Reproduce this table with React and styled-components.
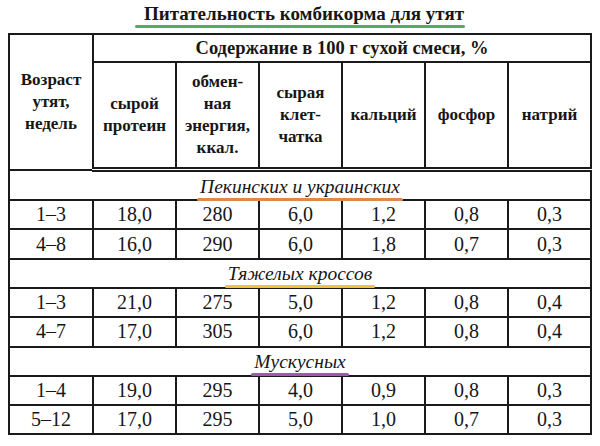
import styled, { createGlobalStyle } from 'styled-components';

const serif = `"Liberation Serif", "Tinos", "Times New Roman", serif`;

const GlobalStyle = createGlobalStyle`
  body {
    margin: 0;
    background: #ffffff;
    color: #161616;
  }
`;

const Page = styled.div`
  width: 600px;
  height: 446px;
  padding: 0 8px;
  box-sizing: border-box;
  font-family: ${serif};
`;

const TitleRow = styled.div`
  display: flex;
  justify-content: center;
  align-items: flex-start;
  height: 33px;
  padding-top: 3px;
  box-sizing: border-box;
`;

const Title = styled.h1`
  position: relative;
  margin: 0;
  font-family: ${serif};
  font-size: 19px;
  font-weight: bold;
  line-height: 22px;
  padding: 0 1px 0 9px;
  &::after {
    content: '';
    position: absolute;
    left: 0;
    right: 0;
    bottom: -3px;
    height: 3px;
    border-radius: 2px;
    background: ${(p) => p.$line};
  }
`;

const Table = styled.table`
  width: 583px;
  border-collapse: collapse;
  table-layout: fixed;
  border: 2px solid #1a1a1a;
  font-family: ${serif};
`;

const HeadCell = styled.th`
  border: 2px solid #1a1a1a;
  font-family: ${serif};
  font-size: ${(p) => p.$size || '17px'};
  font-weight: bold;
  line-height: 22px;
  height: ${(p) => p.$h || 'auto'};
  padding: 0;
  text-align: center;
  vertical-align: middle;
`;

const HeadRow = styled.tr`
  &:last-child th {
    border-bottom: 5px double #1a1a1a;
  }
`;

const Cell = styled.td`
  border: 2px solid #1a1a1a;
  font-family: ${serif};
  font-size: 20px;
  height: 27.4px;
  padding: 0;
  line-height: 25px;
  text-align: center;
  vertical-align: middle;
`;

const SectionCell = styled.td`
  border: 2px solid #1a1a1a;
  height: 27px;
  padding: 0;
  text-align: center;
  vertical-align: middle;
`;

const SectionLabel = styled.span`
  position: relative;
  display: inline-block;
  font-family: ${serif};
  font-style: italic;
  font-size: 19.5px;
  line-height: 22px;
  padding: 0 3px;
  top: 1px;
  &::after {
    content: '';
    position: absolute;
    left: 0;
    right: 0;
    bottom: -3px;
    height: 3px;
    border-radius: 2px;
    background: ${(p) => p.$line};
  }
`;

const sections = [
  {
    name: 'Пекинских и украинских',
    line: '#d98a4f',
    rows: [
      ['1–3', '18,0', '280', '6,0', '1,2', '0,8', '0,3'],
      ['4–8', '16,0', '290', '6,0', '1,8', '0,7', '0,3'],
    ],
  },
  {
    name: 'Тяжелых кроссов',
    line: '#e8c547',
    rows: [
      ['1–3', '21,0', '275', '5,0', '1,2', '0,8', '0,4'],
      ['4–7', '17,0', '305', '6,0', '1,2', '0,8', '0,4'],
    ],
  },
  {
    name: 'Мускусных',
    line: '#9a5ea8',
    rows: [
      ['1–4', '19,0', '295', '4,0', '0,9', '0,8', '0,3'],
      ['5–12', '17,0', '295', '5,0', '1,0', '0,7', '0,3'],
    ],
  },
];

const heads = [
  ['сырой', 'протеин'],
  ['обмен-', 'ная', 'энергия,', 'ккал.'],
  ['сырая', 'клет-', 'чатка'],
  ['кальций'],
  ['фосфор'],
  ['натрий'],
];

const Lines = ({ lines }) =>
  lines.map((l, i) => (
    <span key={i}>
      {l}
      {i < lines.length - 1 && <br />}
    </span>
  ));

export default function App() {
  return (
    <Page>
      <GlobalStyle />
      <TitleRow>
        <Title $line="#4caf63">Питательность комбикорма для утят</Title>
      </TitleRow>
      <Table>
        <colgroup>
          <col style={{ width: 84 }} />
          {heads.map((_, i) => (
            <col key={i} style={{ width: 83 }} />
          ))}
        </colgroup>
        <thead>
          <HeadRow>
            <HeadCell rowSpan={2}>
              <Lines lines={['Возраст', 'утят,', 'недель']} />
            </HeadCell>
            <HeadCell colSpan={6} $h="26px" $size="18.5px">
              Содержание в 100 г сухой смеси, %
            </HeadCell>
          </HeadRow>
          <HeadRow>
            {heads.map((h, i) => (
              <HeadCell key={i} $h="104px">
                <Lines lines={h} />
              </HeadCell>
            ))}
          </HeadRow>
        </thead>
        <tbody>
          {sections.map((s) => [
            <tr key={s.name}>
              <SectionCell colSpan={7}>
                <SectionLabel $line={s.line}>{s.name}</SectionLabel>
              </SectionCell>
            </tr>,
            ...s.rows.map((r, ri) => (
              <tr key={s.name + ri}>
                {r.map((v, ci) => (
                  <Cell key={ci}>{v}</Cell>
                ))}
              </tr>
            )),
          ])}
        </tbody>
      </Table>
    </Page>
  );
}
